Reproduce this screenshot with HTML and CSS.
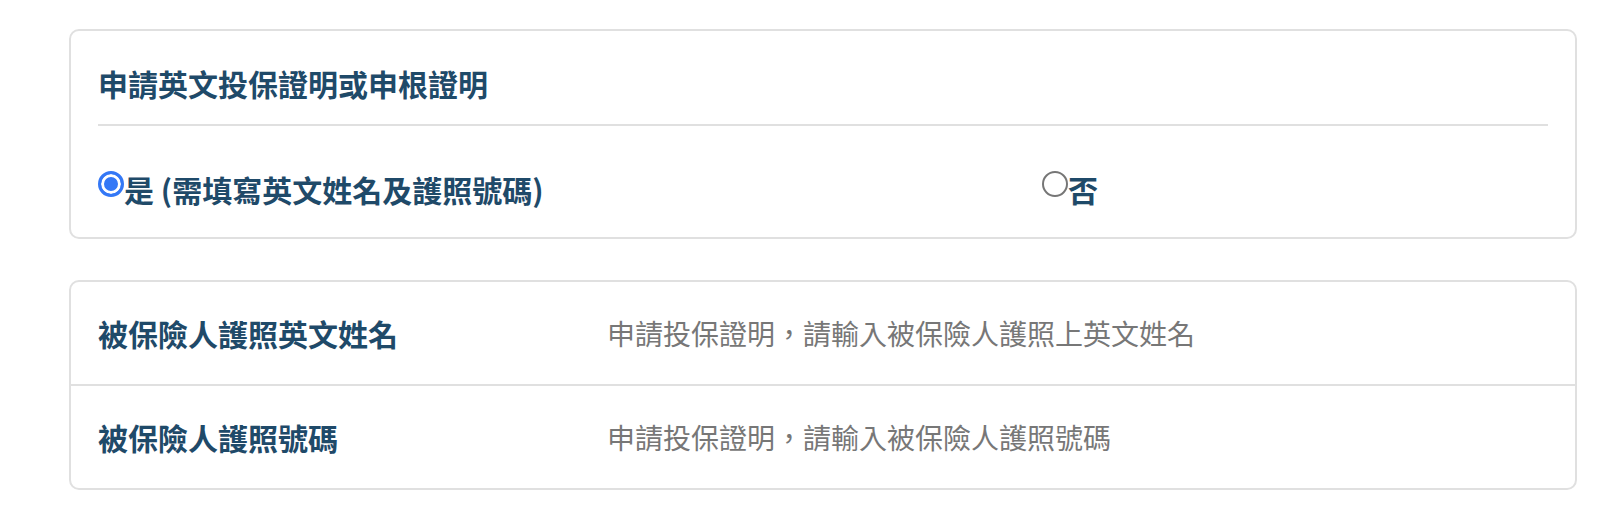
FILE: index.html
```html
<!DOCTYPE html>
<html lang="zh-Hant">
<head>
    <meta charset="UTF-8">
    <meta name="viewport" content="width=device-width, initial-scale=1.0">
    <link rel="stylesheet" href="styles.css">
</head>
<body>
    <div class="container">
        <section class="card">
            <h2 class="card-title">申請英文投保證明或申根證明</h2>
            <div class="options">
                <label class="option">
                    <input type="radio" name="cert" checked>
                    <span>是 (需填寫英文姓名及護照號碼)</span>
                </label>
                <label class="option">
                    <input type="radio" name="cert">
                    <span>否</span>
                </label>
            </div>
        </section>

        <section class="card">
            <div class="field">
                <label class="field-label" for="en-name">被保險人護照英文姓名</label>
                <input id="en-name" class="field-input" type="text" placeholder="申請投保證明，請輸入被保險人護照上英文姓名">
            </div>
            <div class="field">
                <label class="field-label" for="passport">被保險人護照號碼</label>
                <input id="passport" class="field-input" type="text" placeholder="申請投保證明，請輸入被保險人護照號碼">
            </div>
        </section>
    </div>
</body>
</html>
```

FILE: styles.css
```css
:root {
    --text: #1f4a69;
    --muted: #777;
    --line: #e0e0e0;
    --accent: #3478f6;
    --radius: 10px;
}

* {
    margin: 0;
    padding: 0;
    box-sizing: border-box;
}

body {
    font-family: "Noto Sans CJK TC", "Noto Sans", sans-serif;
    background: #fff;
    color: var(--text);
}

.container {
    padding: 29px 25px 0 69px;
    display: flex;
    flex-direction: column;
    gap: 41px;
}

.card {
    border: 2px solid var(--line);
    border-radius: var(--radius);
}

.card-title {
    margin: 0 27px;
    padding: 32px 0 21px;
    font-size: 30px;
    line-height: 40px;
    font-weight: 600;
    border-bottom: 2px solid var(--line);
}

.options {
    display: grid;
    grid-template-columns: 944px 1fr;
    padding: 43px 27px 28px;
}

.option {
    display: flex;
    align-items: center;
    font-size: 30px;
    line-height: 40px;
    font-weight: 600;
    cursor: pointer;
}

.option input {
    appearance: none;
    -webkit-appearance: none;
    width: 26px;
    height: 26px;
    margin: 0 0 10px;
    border: 2px solid #767676;
    border-radius: 50%;
    background: #fff;
    flex-shrink: 0;
}

.option input:checked {
    border: 3px solid var(--accent);
    background: var(--accent);
    box-shadow: inset 0 0 0 3px #fff;
}

.field {
    display: grid;
    grid-template-columns: 509px 1fr;
    align-items: center;
    height: 104px;
    padding: 0 27px;
    border-bottom: 2px solid var(--line);
}

.field:last-child {
    border-bottom: none;
    height: 102px;
}

.field-label {
    font-size: 30px;
    font-weight: 600;
}

.field-input {
    border: none;
    outline: none;
    font: inherit;
    font-size: 28px;
    color: var(--text);
    background: transparent;
    width: 100%;
}

.field-input::placeholder {
    color: var(--muted);
}
```
